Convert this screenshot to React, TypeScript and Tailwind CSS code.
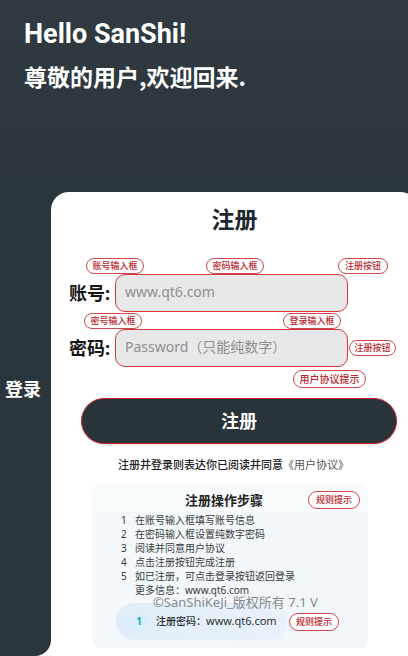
import React, { useState } from 'react';

interface TagProps {
    children: React.ReactNode;
    className?: string;
}

// Small red outlined callout
const Tag: React.FC<TagProps> = ({ children, className = '' }) => (
    <span
        className={`inline-flex flex-none items-center justify-center whitespace-nowrap rounded-full border border-[#d0474b] bg-white font-medium text-[#b8282d] ${className}`}
    >
        {children}
    </span>
);

const steps = [
    '在账号输入框填写账号信息',
    '在密码输入框设置纯数字密码',
    '阅读并同意用户协议',
    '点击注册按钮完成注册',
    '如已注册，可点击登录按钮返回登录',
];

const inputClass =
    'h-[38px] min-w-0 flex-1 rounded-[10px] border border-[#d9363c] bg-[#e8e8e8] px-[9px] pb-[3px] text-sm text-gray-700 outline-none placeholder:text-[#8f8f8f]';

const App: React.FC = () => {
    const [account, setAccount] = useState('');
    const [password, setPassword] = useState('');

    return (
        <div className="flex min-h-screen flex-col overflow-hidden bg-white font-['Noto_Sans','Noto_Sans_CJK_SC',sans-serif]">
            {/* Greeting */}
            <header className="h-48 bg-gradient-to-b from-[#303a40] to-[#2b363c] px-6 pt-4 text-white">
                <h1 className="font-['Roboto','Noto_Sans_CJK_SC',sans-serif] text-[27px] leading-9 font-bold">Hello SanShi!</h1>
                <p className="mt-2 font-['Noto_Sans_CJK_SC',sans-serif] text-[23px] leading-8 font-bold">尊敬的用户,欢迎回来.</p>
            </header>

            <div className="flex flex-1">
                {/* Switch to login */}
                <aside className="flex w-[51px] flex-none flex-col items-start rounded-br-2xl bg-[#2b363c] pt-[183px] pl-[5px]">
                    <button type="button" className="text-lg leading-7 font-bold text-white">
                        登录
                    </button>
                </aside>

                {/* The card runs past the right edge of the window */}
                <div className="-mr-[10px] min-w-0 flex-1 bg-[#2b363c]">
                    <main className="min-h-full rounded-t-[18px] bg-white pb-2">
                        <h2 className="pt-[11px] text-center text-[23px] leading-8 font-bold text-[#1d282e]">注册</h2>

                        <form onSubmit={(e) => e.preventDefault()}>
                            <div className="mt-[23px] flex h-4 pr-[30px] pl-[35px]">
                                <Tag className="w-[58px] text-[9px] leading-3">账号输入框</Tag>
                                <Tag className="ml-[62px] w-[58px] text-[9px] leading-3">密码输入框</Tag>
                                <Tag className="ml-auto w-[50px] text-[9px] leading-3">注册按钮</Tag>
                            </div>

                            <div className="flex items-center pr-[70px] pl-[18px]">
                                <label htmlFor="account" className="w-[46px] flex-none text-lg leading-6 font-bold text-[#161616]">
                                    账号:
                                </label>
                                <input
                                    id="account"
                                    type="text"
                                    placeholder="www.qt6.com"
                                    value={account}
                                    onChange={(e) => setAccount(e.target.value)}
                                    className={inputClass}
                                />
                            </div>

                            <div className="mt-px flex h-4 justify-between pr-[77px] pl-[33px]">
                                <Tag className="w-[58px] text-[9px] leading-3">密号输入框</Tag>
                                <Tag className="w-[58px] text-[9px] leading-3">登录输入框</Tag>
                            </div>

                            <div className="flex items-center pr-[22px] pl-[18px]">
                                <label htmlFor="password" className="w-[46px] flex-none text-lg leading-6 font-bold text-[#161616]">
                                    密码:
                                </label>
                                <input
                                    id="password"
                                    type="password"
                                    placeholder="Password（只能纯数字）"
                                    value={password}
                                    onChange={(e) => setPassword(e.target.value)}
                                    className={inputClass}
                                />
                                <Tag className="ml-px h-4 w-[47px] text-[9px] leading-3">注册按钮</Tag>
                            </div>

                            <div className="mt-[3px] flex justify-end pr-[52px]">
                                <Tag className="h-[18px] w-[73px] text-[10px] leading-3">用户协议提示</Tag>
                            </div>

                            <div className="mt-[10px] pr-[21px] pl-[30px]">
                                <button
                                    type="submit"
                                    className="h-[46px] w-full rounded-full border border-[#cf2027] bg-[#28333a] text-lg font-bold text-white shadow-sm"
                                >
                                    注册
                                </button>
                            </div>
                        </form>

                        <p className="mt-[11px] pl-[67px] text-[11px] leading-5 font-medium whitespace-nowrap text-[#222]">
                            注册并登录则表达你已阅读并同意
                            <a href="#agreement" className="font-normal text-[#555]">
                                《用户协议》
                            </a>
                        </p>

                        {/* Steps */}
                        <section className="mt-[9px] mr-[50px] ml-[41px] overflow-hidden rounded-lg bg-gradient-to-r from-[#f3f9fb] to-[#eff5f9] pb-2">
                            <div className="flex h-7 items-center bg-[#f8fbfc] pt-1 pr-2 pl-[93px]">
                                <h3 className="text-[13px] leading-5 font-bold whitespace-nowrap text-[#222]">注册操作步骤</h3>
                                <Tag className="ml-auto h-[18px] w-[52px] text-[9px] leading-3">规则提示</Tag>
                            </div>
                            <ol className="pt-px pl-[29px] text-[10px] leading-[14px] text-[#383d40]">
                                {steps.map((step, i) => (
                                    <li key={step} className="flex whitespace-nowrap">
                                        <span className="w-[14px] flex-none">{i + 1}</span>
                                        {step}
                                    </li>
                                ))}
                            </ol>
                            <p className="pl-[43px] text-[10px] leading-[14px] text-[#383d40]">更多信息：www.qt6.com</p>

                            <div className="relative mt-1.5 flex items-center gap-0.5 pl-6">
                                <div className="flex h-[37px] w-[171px] flex-none items-center rounded-full bg-gradient-to-r from-[#e0edf8] to-[#e9f2fc] pl-[14px] text-[10px] text-[#2a2f33]">
                                    <span className="flex size-[18px] flex-none items-center justify-center rounded-full bg-[#d8eff8] font-bold text-[#26a3c4]">
                                        1
                                    </span>
                                    <span className="ml-2 font-medium whitespace-nowrap">
                                        注册密码：<span className="text-[11px] font-normal">www.qt6.com</span>
                                    </span>
                                </div>
                                <Tag className="h-[18px] w-[50px] text-[9px] leading-3">规则提示</Tag>
                                <small className="absolute -top-[7px] left-[61px] text-[13px] leading-3 whitespace-nowrap text-[#85898c]">
                                    ©SanShiKeJi_版权所有 7.1 V
                                </small>
                            </div>
                        </section>
                    </main>
                </div>
            </div>
        </div>
    );
};

export default App;
